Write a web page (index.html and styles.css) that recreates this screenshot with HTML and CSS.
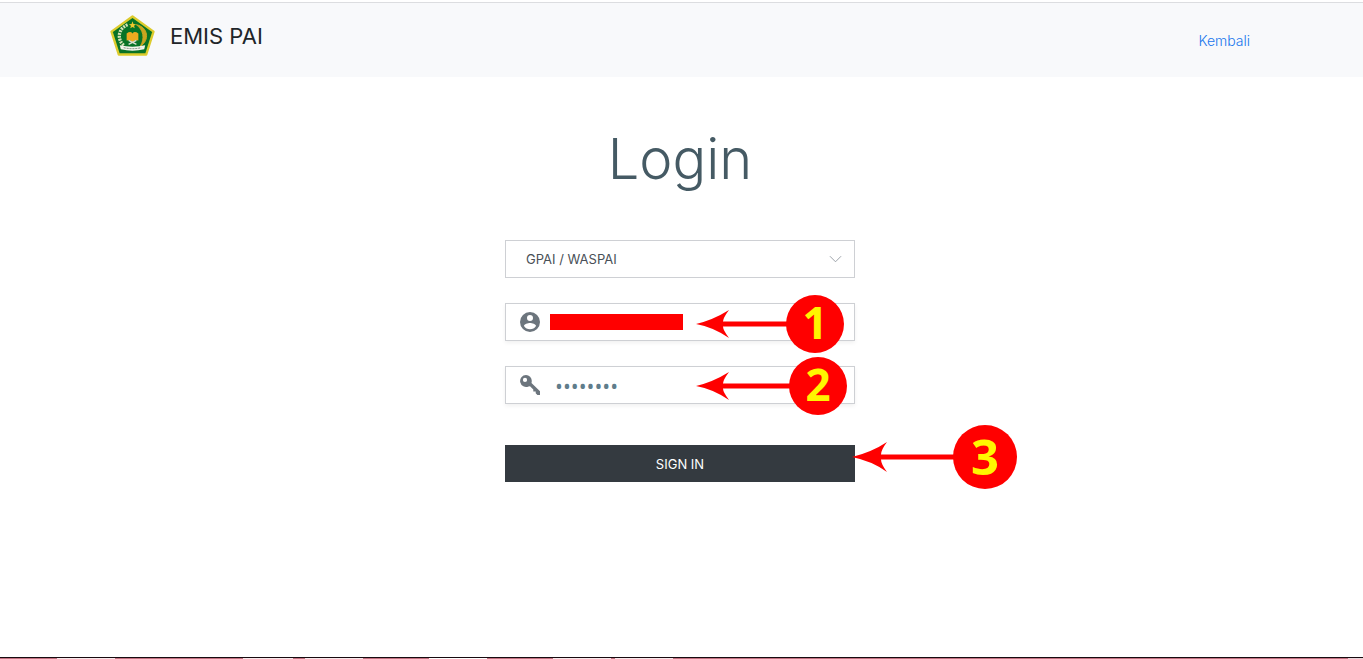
FILE: index.html
```html
<!DOCTYPE html>
<html lang="id">
<head>
<meta charset="utf-8">
<meta name="viewport" content="width=device-width, initial-scale=1">
<title>EMIS PAI - Login</title>
<link rel="stylesheet" href="styles.css">
</head>
<body>
<header class="topbar">
  <div class="container">
    <div class="brand">
      <svg class="logo" viewBox="0 0 46 42" aria-hidden="true">
        <path d="M23 1.500 44.500 17 37 40.500H9L1.500 17Z" fill="#087326" stroke="#dccb2c" stroke-width="2.400" stroke-linejoin="round"/>
        <path d="M18 10C8 14 7 25 14 31" fill="none" stroke="#d5e0b5" stroke-width="3.400" stroke-dasharray="2 1"/>
        <path d="M27 10C39 12 41 26 31 32C36 24 34 15 27 10Z" fill="#c9a51f" stroke="#c9a51f"/>
        <path d="m23 6.500 1 2.700 2.700.2-2.100 1.600.7 2.600-2.300-1.400-2.300 1.400.7-2.600-2.100-1.600 2.700-.2Z" fill="#efc72e"/>
        <path d="M17 19Q21 16 23 19Q25 16 29 19V26Q25 25 23 28Q21 25 17 26Z" fill="#efaa20"/>
        <path d="m19 30 8-4M27 30l-8-4" stroke="#d9ded0" stroke-width="1.500"/>
        <path d="M10 31Q23 34 36 31L35 35Q23 38 11 35Z" fill="#f3f5ec"/>
        <path d="M14 33.500Q23 35.500 32 33.500" fill="none" stroke="#718273" stroke-dasharray="2 1"/>
      </svg>
      <span class="brand-name">EMIS PAI</span>
    </div>
    <a class="back" href="#">Kembali</a>
  </div>
</header>
<main class="main">
  <h1 class="title">Login</h1>
  <form class="form">
    <div class="field field-select">
      <select class="control" aria-label="Jenis pengguna"><option>GPAI / WASPAI</option></select>
      <svg class="chevron" viewBox="0 0 14 8" aria-hidden="true"><path d="m1 1 6 6 6-6"/></svg>
    </div>
    <div class="field">
      <svg class="icon" viewBox="2 2 20 20" aria-hidden="true"><path d="M12 2a10 10 0 1 0 0 20 10 10 0 0 0 0-20zm0 3a3 3 0 1 1 0 6 3 3 0 0 1 0-6zm0 14.200a7.200 7.200 0 0 1-6-3.220c.03-1.990 4-3.080 6-3.080s5.970 1.090 6 3.080a7.200 7.200 0 0 1-6 3.220z"/></svg>
      <input class="control" type="text" aria-label="Nama pengguna">
      <span class="redaction"></span>
      <div class="callout callout-user">
        <svg class="arrow" viewBox="0 0 92 28" aria-hidden="true"><path d="M0 14Q17 10 33 0Q27 8 27 11.500H92V16.500H27Q27 20 33 28Q17 17 0 14Z"/></svg>
        <span class="number">1</span>
      </div>
    </div>
    <div class="field">
      <svg class="icon" viewBox="0 0 20 20" aria-hidden="true"><path fill-rule="evenodd" d="M6 0a6 6 0 1 0 2.500 11.500l1.500-.3 3.300 3.200v2.200h2.400v1.700l1.700 1.700H20v-3.800l-8.500-8.300.3-1.900A6 6 0 0 0 6 0ZM5 2.800a2.100 2.100 0 1 1 0 4.200 2.100 2.100 0 0 1 0-4.200Z"/></svg>
      <input class="control password" type="password" value="password" aria-label="Kata sandi">
      <div class="callout callout-pass">
        <svg class="arrow" viewBox="0 0 95 28" aria-hidden="true"><path d="M0 14Q17 10 33 0Q27 8 27 11.500H95V16.500H27Q27 20 33 28Q17 17 0 14Z"/></svg>
        <span class="number">2</span>
      </div>
    </div>
    <div class="submit-row">
      <button class="submit" type="button">SIGN IN</button>
      <div class="callout callout-submit">
        <svg class="arrow" viewBox="0 0 103 30" aria-hidden="true"><path d="M0 15Q20 10 35 0Q29 8 29 12.500H103V17.500H29Q29 22 35 30Q20 19 0 15Z"/></svg>
        <span class="number">3</span>
      </div>
    </div>
  </form>
</main>
<footer class="edge"></footer>
</body>
</html>
```
FILE: styles.css
```css
* { box-sizing: border-box; }
body {
  margin: 0;
  min-height: 100vh;
  display: flex;
  flex-direction: column;
  background: #fff;
  font-family: Inter, "Open Sans", sans-serif;
}
.topbar {
  margin-top: 2px;
  padding: 12px 0 21px;
  border-top: 1px solid #dcdde0;
  background: #f8f9fb;
}
.container {
  max-width: 1143px;
  margin: 0 auto;
  display: flex;
  justify-content: space-between;
  align-items: center;
}
.brand { display: flex; align-items: center; gap: 15px; }
.logo { width: 45px; height: 41px; }
.brand-name { font-size: 22px; line-height: 40px; color: #212529; }
.back {
  margin-top: 10px;
  padding-right: 3px;
  font-size: 14px;
  font-weight: 300;
  line-height: 20px;
  color: #1877ed;
  text-decoration: none;
}
.main { padding: 46px 3px 48px 0; }
.title {
  margin: 0 0 45px;
  font-size: 56px;
  font-weight: 300;
  line-height: 72px;
  text-align: center;
  color: #455a64;
}
.form {
  max-width: 350px;
  margin: 0 auto;
  display: flex;
  flex-direction: column;
  gap: 25px;
}
.field {
  position: relative;
  display: flex;
  align-items: center;
  height: 38px;
  padding-left: 14px;
  border: 1px solid #ced0d4;
  background: #fff;
  box-shadow: 0 2px 4px #0000000f;
}
.field-select { padding: 0; box-shadow: none; }
.control {
  flex: 1;
  min-width: 0;
  height: 36px;
  padding: 0 20px;
  border: 0;
  outline: 0;
  appearance: none;
  background: transparent;
  font: 400 13px/20px Inter, sans-serif;
  color: #495057;
}
.password { padding: 2px 15px 0; font-family: "Open Sans", sans-serif; font-size: 21px; color: #607d8b; }
.icon { width: 20px; height: 20px; fill: #6c757d; }
.chevron {
  position: absolute;
  right: 12px;
  width: 13px;
  height: 8px;
  fill: none;
  stroke: #949ba2;
  pointer-events: none;
}
.redaction { position: absolute; left: 44px; top: 10px; width: 133px; height: 16px; background: red; }
.submit-row { position: relative; margin-top: 16px; }
.submit {
  display: block;
  width: 100%;
  height: 37px;
  border: 0;
  background: #343a40;
  color: #fff;
  font: 400 13px/20px Inter, sans-serif;
}
.callout { position: absolute; display: flex; align-items: center; }
.callout-user { left: 190px; top: -9px; }
.callout-pass { left: 190px; top: -10px; }
.callout-submit { left: 347px; top: -20px; }
.arrow { width: 92px; height: 28px; fill: red; }
.callout-pass .arrow { width: 95px; }
.callout-submit .arrow { width: 103px; height: 30px; }
.number {
  width: 58px;
  height: 58px;
  margin-left: -2px;
  border-radius: 50%;
  background: red;
  color: #fff600;
  font: 700 44px/55px "Noto Sans", "Open Sans", sans-serif;
  text-align: center;
}
.callout-submit .number { width: 64px; height: 64px; font-size: 49px; line-height: 62px; }
.edge {
  height: 2px;
  margin-top: auto;
  border-top: 1px solid #170b10;
  background: linear-gradient(90deg, #c27080 57px, #f8e8eb 57px 115px, #c27080 115px 243px, #f8e8eb 243px 293px, #c27080 293px 305px, #f8e8eb 305px 363px, #c27080 363px 429px, #fff 429px 487px, #c27080 487px 553px, #f8e8eb 553px 611px, #c27080 611px 615px, #f8e8eb 615px 673px, #c27080 673px 1348px, #e8d5da 1348px);
}
```
